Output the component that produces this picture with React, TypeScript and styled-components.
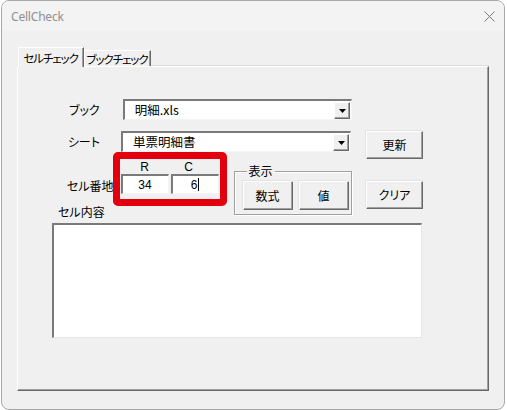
import React from "react";
import styled, { createGlobalStyle } from "styled-components";

const Global = createGlobalStyle`
  html, body { margin: 0; padding: 0; background: #ffffff; }
  * { box-sizing: border-box; }
`;

const JP = `"Noto Sans CJK JP", "Noto Sans", sans-serif`;

const Window = styled.div`
  width: 504px;
  height: 410px;
  margin-left: 1px;
  border: 1px solid #a8a8a8;
  border-radius: 8px;
  background: #f0f0f0;
  overflow: hidden;
  display: flex;
  flex-direction: column;
`;

const TitleBar = styled.div`
  height: 30px;
  background: #f3f3f3;
  display: flex;
  align-items: center;
  justify-content: space-between;
  padding: 0 9px 0 9px;
`;

const Title = styled.span`
  font-family: "Noto Sans", "Liberation Sans", sans-serif;
  font-size: 12px;
  color: #909090;
  letter-spacing: -0.2px;
`;

const CloseIcon = styled.svg`
  width: 11px;
  height: 11px;
  margin-top: 1px;
`;

const Client = styled.div`
  flex: 1;
  display: flex;
  flex-direction: column;
  padding: 16px 15px 18px 15px;
`;

const TabStrip = styled.div`
  display: flex;
  align-items: flex-end;
  height: 20px;
  margin-bottom: -1px;
  padding-left: 1px;
  position: relative;
  z-index: 1;
`;

const Tab = styled.div<{ $active?: boolean }>`
  width: ${(p) => (p.$active ? 66 : 67)}px;
  height: ${(p) => (p.$active ? 20 : 16)}px;
  margin-bottom: ${(p) => (p.$active ? 0 : 1)}px;
  background: #f0f0f0;
  border-top: 1px solid #ffffff;
  border-left: 1px solid #ffffff;
  border-right: 1px solid #696969;
  box-shadow: inset -1px 0 0 #a0a0a0;
  font-family: ${JP};
  font-size: 11.5px;
  font-feature-settings: "palt" 1;
  letter-spacing: -1.1px;
  white-space: nowrap;
  color: #000;
  display: flex;
  align-items: center;
  justify-content: center;
  line-height: 14px;
  padding: ${(p) => (p.$active ? "0 1px 0 0" : "1px 1px 0 0")};
`;

const Panel = styled.div`
  flex: 1;
  border-top: 1px solid #ffffff;
  border-left: 1px solid #ffffff;
  border-right: 1px solid #696969;
  border-bottom: 1px solid #696969;
  box-shadow: inset -1px -1px 0 #a0a0a0, 0 -1px 0 #dcdcdc;
  display: flex;
  flex-direction: column;
`;

const TopArea = styled.div`
  display: flex;
`;

const LeftArea = styled.div`
  width: 334px;
  display: flex;
  flex-direction: column;
`;

const Row = styled.div<{ $top: number }>`
  display: flex;
  align-items: center;
  height: 21px;
  margin-top: ${(p) => p.$top}px;
`;

const FieldLabel = styled.div<{ $width: number }>`
  width: ${(p) => p.$width}px;
  text-align: right;
  font-family: ${JP};
  font-size: 12px;
  font-feature-settings: "palt";
  white-space: nowrap;
  line-height: 14px;
  color: #000;
`;

const Combo = styled.div<{ $left: number }>`
  margin-left: ${(p) => p.$left}px;
  width: 230px;
  height: 21px;
  background: #ffffff;
  border-top: 2px solid #7a7a7a;
  border-left: 2px solid #7a7a7a;
  border-right: 1px solid #f4f4f4;
  border-bottom: 1px solid #f4f4f4;
  display: flex;
  align-items: center;
`;

const ComboText = styled.span`
  padding-left: 10px;
  font-family: ${JP};
  font-size: 12.5px;
  font-feature-settings: "palt";
  line-height: 14px;
  color: #000;
`;

const DropButton = styled.div`
  margin-left: auto;
  margin-right: 1px;
  width: 16px;
  height: 17px;
  background: #f0f0f0;
  border-top: 1px solid #ffffff;
  border-left: 1px solid #ffffff;
  border-right: 1px solid #696969;
  border-bottom: 1px solid #696969;
  box-shadow: inset -1px -1px 0 #a0a0a0;
  display: flex;
  align-items: center;
  justify-content: center;
`;

const Arrow = styled.svg`
  width: 7px;
  height: 4px;
  margin-top: 1px;
`;

const AddressRow = styled.div`
  display: flex;
  align-items: flex-start;
  height: 62px;
`;

const AddressLabel = styled(FieldLabel)`
  margin-top: 27px;
`;

const RedBox = styled.div`
  margin-left: -1px;
  width: 114px;
  height: 54px;
  border: 7px solid #e2000f;
  border-radius: 5px;
  padding: 0 1px;
  display: grid;
  grid-template-columns: 48px 48px;
  grid-template-rows: 15px 20px;
  column-gap: 2px;
`;

const AxisLabel = styled.div<{ $shift: number }>`
  font-family: "Liberation Sans", "Noto Sans", sans-serif;
  font-size: 12px;
  line-height: 14px;
  text-align: center;
  color: #000;
  padding-top: 1px;
  padding-right: ${(p) => p.$shift}px;
`;

const CellInput = styled.div`
  height: 20px;
  background: #ffffff;
  border-top: 2px solid #7a7a7a;
  border-left: 2px solid #7a7a7a;
  border-right: 1px solid #f4f4f4;
  border-bottom: 1px solid #f4f4f4;
  display: flex;
  align-items: center;
  justify-content: center;
  font-family: "Liberation Sans", "Noto Sans", sans-serif;
  font-size: 12px;
  color: #000;
`;

const Caret = styled.span`
  display: inline-block;
  width: 1px;
  height: 13px;
  background: #000;
  margin-left: 1px;
`;

const Frame = styled.div`
  position: relative;
  margin-left: 7px;
  margin-top: 19px;
  width: 119px;
  height: 44px;
  border: 1px solid #a0a0a0;
  box-shadow: inset 1px 1px 0 #ffffff, 1px 1px 0 #ffffff;
  display: flex;
  align-items: flex-start;
  gap: 6px;
  padding: 9px 0 0 8px;
`;

const FrameCaption = styled.span`
  position: absolute;
  left: 12px;
  top: -8px;
  padding: 0 2px;
  background: #f0f0f0;
  font-family: ${JP};
  font-size: 12px;
  line-height: 14px;
  color: #000;
`;

const Button = styled.div<{ $w: number; $h: number }>`
  width: ${(p) => p.$w}px;
  height: ${(p) => p.$h}px;
  background: #f0f0f0;
  border-top: 1px solid #ffffff;
  border-left: 1px solid #ffffff;
  border-right: 1px solid #696969;
  border-bottom: 1px solid #696969;
  box-shadow: inset -1px -1px 0 #a0a0a0, -1px -1px 0 #e3e3e3;
  display: flex;
  align-items: center;
  justify-content: center;
  font-family: ${JP};
  font-size: 12px;
  font-feature-settings: "palt";
  line-height: 14px;
  color: #000;
`;

const ButtonColumn = styled.div`
  margin-left: 14px;
  margin-top: 64px;
  display: flex;
  flex-direction: column;
  gap: 22px;
`;

const ContentLabel = styled.div`
  margin-top: -9px;
  margin-left: 40px;
  font-family: ${JP};
  font-size: 12px;
  font-feature-settings: "palt";
  line-height: 14px;
  color: #000;
`;

const ContentBox = styled.div`
  margin-top: 4px;
  margin-left: 34px;
  width: 370px;
  height: 115px;
  background: #ffffff;
  border-top: 2px solid #7a7a7a;
  border-left: 2px solid #7a7a7a;
  border-right: 1px solid #e6e6e6;
  border-bottom: 1px solid #e6e6e6;
`;

const DropArrow = () => (
  <DropButton>
    <Arrow viewBox="0 0 7 4">
      <path d="M0 0H7L3.5 4Z" fill="#000" />
    </Arrow>
  </DropButton>
);

export default function App() {
  return (
    <>
      <Global />
      <Window>
        <TitleBar>
          <Title>CellCheck</Title>
          <CloseIcon viewBox="0 0 11 11">
            <path d="M0.5 0.5L10.5 10.5M10.5 0.5L0.5 10.5" stroke="#7a7a7a" strokeWidth="1" fill="none" />
          </CloseIcon>
        </TitleBar>
        <Client>
          <TabStrip>
            <Tab $active>セルチェック</Tab>
            <Tab>ブックチェック</Tab>
          </TabStrip>
          <Panel>
            <TopArea>
              <LeftArea>
                <Row $top={32}>
                  <FieldLabel $width={82}>ブック</FieldLabel>
                  <Combo $left={23}>
                    <ComboText>明細.xls</ComboText>
                    <DropArrow />
                  </Combo>
                </Row>
                <Row $top={11}>
                  <FieldLabel $width={82}>シート</FieldLabel>
                  <Combo $left={21}>
                    <ComboText>単票明細書</ComboText>
                    <DropArrow />
                  </Combo>
                </Row>
                <AddressRow>
                  <AddressLabel $width={96}>セル番地</AddressLabel>
                  <RedBox>
                    <AxisLabel $shift={0}>R</AxisLabel>
                    <AxisLabel $shift={12}>C</AxisLabel>
                    <CellInput>34</CellInput>
                    <CellInput>
                      6<Caret />
                    </CellInput>
                  </RedBox>
                  <Frame>
                    <FrameCaption>表示</FrameCaption>
                    <Button $w={50} $h={29}>数式</Button>
                    <Button $w={50} $h={29}>値</Button>
                  </Frame>
                </AddressRow>
              </LeftArea>
              <ButtonColumn>
                <Button $w={57} $h={28}>更新</Button>
                <Button $w={57} $h={28}>クリア</Button>
              </ButtonColumn>
            </TopArea>
            <ContentLabel>セル内容</ContentLabel>
            <ContentBox />
          </Panel>
        </Client>
      </Window>
    </>
  );
}
